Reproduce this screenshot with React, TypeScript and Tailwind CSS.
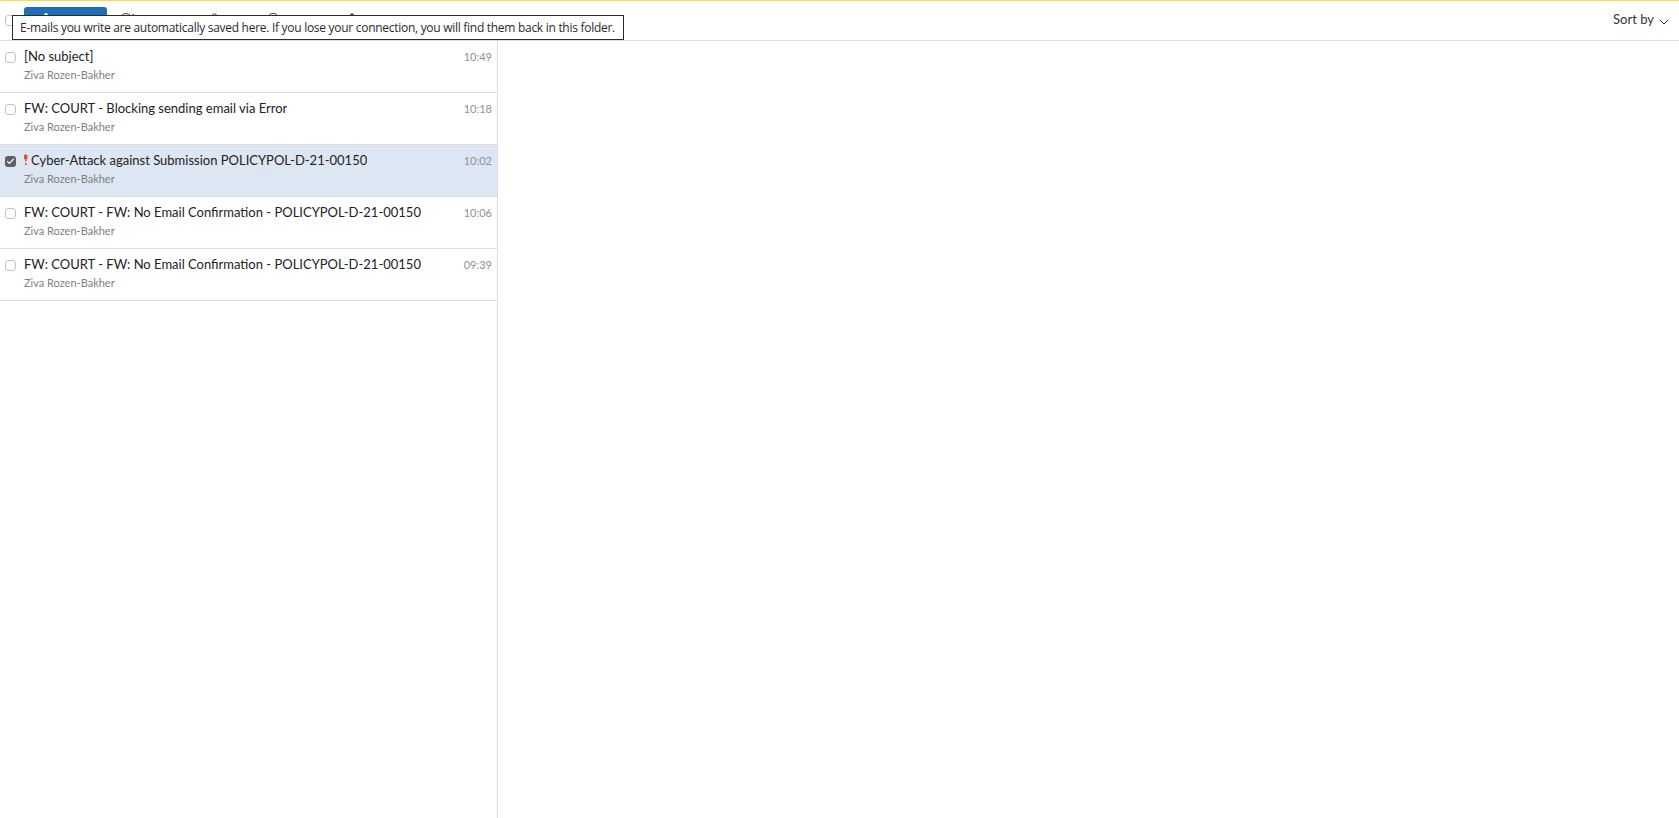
import { useState } from "react";
import { Check } from "lucide-react";

type Draft = {
  id: number;
  subject: string;
  sender: string;
  time: string;
  urgent?: boolean;
};

const drafts: Draft[] = [
  { id: 1, subject: "[No subject]", sender: "Ziva Rozen-Bakher", time: "10:49" },
  { id: 2, subject: "FW: COURT - Blocking sending email via Error", sender: "Ziva Rozen-Bakher", time: "10:18" },
  { id: 3, subject: "Cyber-Attack against Submission POLICYPOL-D-21-00150", sender: "Ziva Rozen-Bakher", time: "10:02", urgent: true },
  { id: 4, subject: "FW: COURT - FW: No Email Confirmation - POLICYPOL-D-21-00150", sender: "Ziva Rozen-Bakher", time: "10:06" },
  { id: 5, subject: "FW: COURT - FW: No Email Confirmation - POLICYPOL-D-21-00150", sender: "Ziva Rozen-Bakher", time: "09:39" },
];

function Checkbox({ checked, onChange }: { checked: boolean; onChange?: () => void }) {
  return (
    <button
      role="checkbox"
      aria-checked={checked}
      onClick={onChange}
      className={`flex h-[11px] w-[11px] shrink-0 items-center justify-center rounded-[3px] ${
        checked ? "bg-[#606060]" : "border border-[#c4c4c4] bg-white"
      }`}
    >
      {checked && <Check className="h-[9px] w-[9px] text-white" strokeWidth={3} />}
    </button>
  );
}

function Toolbar() {
  return (
    <header className="relative flex h-[41px] shrink-0 items-start border-t border-b border-t-[#ffd54f] border-b-[#dedee2] pr-[10px] pl-[5px]">
      <div className="mt-[14px]">
        <Checkbox checked={false} />
      </div>

      {/* Actions, mostly covered by the tooltip */}
      <div className="mt-[6px] ml-2 flex h-[26px] items-start">
        <button className="flex h-[26px] w-[83px] rounded-[3px] bg-[#1e6fb8] pt-[6px] pl-[17px]">
          <svg className="h-3 w-3 text-white" viewBox="0 0 12 12" fill="currentColor">
            <path d="M3 2 L4 .3 H6 L7 2 V6 H3 Z" />
          </svg>
        </button>
        <svg className="mt-[6px] ml-[13px] h-[14px] w-[14px] text-[#444]" viewBox="0 0 14 14" fill="none" stroke="currentColor">
          <circle cx="6" cy="6.5" r="6" />
          <path d="M12.5 1.5h1.5" />
        </svg>
        <svg className="mt-[6px] ml-[74px] h-3 w-3 text-[#444]" viewBox="0 0 12 12" fill="none" stroke="currentColor">
          <path d="M3 3 L6.5 .6 L10 3" />
        </svg>
        <svg className="mt-[6px] ml-[48px] h-3 w-3 text-[#444]" viewBox="0 0 12 12" fill="none" stroke="currentColor">
          <path d="M1.5 11V2.5a2 2 0 0 1 2-2h3a2 2 0 0 1 2 2V11" />
        </svg>
        <svg className="mt-[6px] ml-[66px] h-3 w-3 text-[#444]" viewBox="0 0 12 12" fill="currentColor">
          <path d="M6 0 L9 2.5 H3 Z" />
        </svg>
      </div>

      <button className="mt-[8px] ml-auto flex items-center gap-[5px] text-[13px] leading-5 text-[#333]">
        Sort by
        <svg className="mt-[5px] h-[6px] w-[10px]" viewBox="0 0 10 6" fill="none" stroke="currentColor">
          <path d="M.8 .8 L5 5 L9.2 .8" />
        </svg>
      </button>

      <div
        role="tooltip"
        className="absolute top-[14px] left-[12px] z-10 flex h-[25px] w-[612px] items-center border border-[#2b2b2b] bg-white pl-[7px] font-['Open_Sans','Noto_Sans',sans-serif] text-[12px] tracking-[-0.283px] whitespace-nowrap text-[#2b2b2b]"
      >
        E-mails you write are automatically saved here. If you lose your connection, you will find them back in this folder.
      </div>
    </header>
  );
}

export default function App() {
  const [selected, setSelected] = useState<number[]>([3]);

  const toggle = (id: number) => {
    setSelected(prev => (prev.includes(id) ? prev.filter(x => x !== id) : [...prev, id]));
  };

  return (
    <div className="flex h-screen flex-col overflow-hidden bg-white font-['Lato',sans-serif]">
      <Toolbar />
      <div className="flex min-h-0 flex-1">
        <ul className="w-[498px] shrink-0 border-r border-[#dedee2]">
          {drafts.map(draft => (
            <li
              key={draft.id}
              className={`flex h-[52px] items-start border-b border-[#dedee2] pr-[5px] pl-[5px] ${
                selected.includes(draft.id) ? "bg-[#dce7f3]" : ""
              }`}
            >
              <div className="mt-[11px]">
                <Checkbox checked={selected.includes(draft.id)} onChange={() => toggle(draft.id)} />
              </div>
              <div className="ml-2 min-w-0 flex-1 pt-[5px]">
                <div className="flex items-center text-[13px] leading-5 text-[#222]">
                  {draft.urgent && (
                    <svg className="mr-[3px] mb-px h-[11px] w-[4px] shrink-0 text-[#e74c3c]" viewBox="0 0 4 11" fill="currentColor">
                      <path d="M1 0h1v1h1.5v4H2.5v2.5h-1.5V5H0V1h1z" />
                      <path d="M1 9h1.6v2H1z" />
                    </svg>
                  )}
                  <span className="truncate">{draft.subject}</span>
                </div>
                <p className="text-[11px] leading-[18px] text-[#808080]">{draft.sender}</p>
              </div>
              <time className="mt-[6px] text-[11px] leading-5 text-[#8c929c]">{draft.time}</time>
            </li>
          ))}
        </ul>
        <main className="flex-1" />
      </div>
    </div>
  );
}
